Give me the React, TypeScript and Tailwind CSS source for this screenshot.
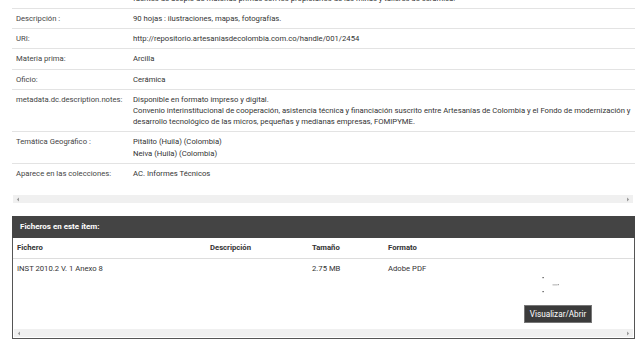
import React from "react";

const rows: { label: string; value: string[] }[] = [
  { label: "", value: ["fuentes de acopio de materias primas con los propietarios de las minas y talleres de cerámica."] },
  { label: "Descripción :", value: ["90 hojas : ilustraciones, mapas, fotografías."] },
  { label: "URI:", value: ["http://repositorio.artesaniasdecolombia.com.co/handle/001/2454"] },
  { label: "Materia prima:", value: ["Arcilla"] },
  { label: "Oficio:", value: ["Cerámica"] },
  {
    label: "metadata.dc.description.notes:",
    value: [
      "Disponible en formato impreso y digital.",
      "Convenio interinstitucional de cooperación, asistencia técnica y financiación suscrito entre Artesanías de Colombia y el Fondo de modernización y desarrollo tecnológico de las micros, pequeñas y medianas empresas, FOMIPYME.",
    ],
  },
  { label: "Temática Geográfico :", value: ["Pitalito (Huila) (Colombia)", "Neiva (Huila) (Colombia)"] },
  { label: "Aparece en las colecciones:", value: ["AC. Informes Técnicos"] },
];

function Scrollbar({ className = "" }: { className?: string }) {
  return (
    <div className={"h-[8px] bg-[#f0f0f0] flex items-center justify-between px-[3px] " + className}>
      <svg width="4" height="5" viewBox="0 0 4 5">
        <path d="M3 0.5 L0.8 2.5 L3 4.5 Z" fill="#9a9a9a" />
      </svg>
      <svg width="4" height="5" viewBox="0 0 4 5">
        <path d="M1 0.5 L3.2 2.5 L1 4.5 Z" fill="#9a9a9a" />
      </svg>
    </div>
  );
}

export default function App() {
  return (
    <div className="w-[640px] h-[363px] overflow-hidden bg-white font-['Roboto',sans-serif] text-[7.7px] leading-[11.2px] text-[#333]">
      <div className="-mt-[9.2px] mx-[12px] w-[623px]">
        {rows.map((r, i) => (
          <div
            key={i}
            className={"flex " + (i < rows.length - 1 ? "border-b border-[#e3e3e3]" : "")}
          >
            <div className={"w-[121px] shrink-0 pl-[4px] text-[#444] " + (i === 0 ? "pt-[2px] pb-[4px]" : "py-[4px]")}>{r.label}</div>
            <div className={"flex-1 pr-[2px] " + (i === 0 ? "pt-[2px] pb-[4px]" : "py-[4px]")}>
              {r.value.map((v, j) => (
                <div key={j}>{v}</div>
              ))}
            </div>
          </div>
        ))}
      </div>
      <Scrollbar className="mt-[12px] ml-[13px] w-[620px]" />

      <div className="mt-[13px] ml-[12px] w-[623px] border-x border-b border-[#555]">
        <div className="h-[22px] -mx-px bg-[#444] flex items-center pl-[8px] text-white font-bold text-[8px]">
          Ficheros en este ítem:
        </div>
        <div className="flex h-[21px] items-center border-b border-[#ddd] font-bold text-[#333]">
          <div className="w-[193px] pl-[4px]">Fichero</div>
          <div className="w-[102px] pl-[4px]">Descripción</div>
          <div className="w-[76px] pl-[4px]">Tamaño</div>
          <div className="w-[92px] pl-[4px]">Formato</div>
          <div className="flex-1" />
        </div>
        <div className="flex h-[70px]">
          <div className="w-[193px] pl-[4px] pt-[4px]">INST 2010.2 V. 1 Anexo 8</div>
          <div className="w-[102px] pl-[4px] pt-[4px]"></div>
          <div className="w-[76px] pl-[4px] pt-[4px]">2.75 MB</div>
          <div className="w-[92px] pl-[4px] pt-[4px]">Adobe PDF</div>
          <div className="flex-1 flex flex-col items-center pt-[16px] pl-[6px]">
            <svg width="32" height="22" viewBox="0 0 32 22">
              <rect x="0.5" y="2" width="1.2" height="1.2" fill="#444" />
              <rect x="10.5" y="9.5" width="5" height="0.8" fill="#999" />
              <rect x="15.8" y="9" width="1" height="1.2" fill="#888" />
              <rect x="0.5" y="16" width="1.2" height="1.2" fill="#444" />
            </svg>
            <button className="mt-[8px] h-[18px] px-[5px] bg-[#3b3b3b] border border-[#777] text-white text-[8.2px] leading-[16px] font-['Roboto',sans-serif]">
              Visualizar/Abrir
            </button>
          </div>
        </div>
        <Scrollbar className="mx-px mb-px" />
      </div>
    </div>
  );
}
